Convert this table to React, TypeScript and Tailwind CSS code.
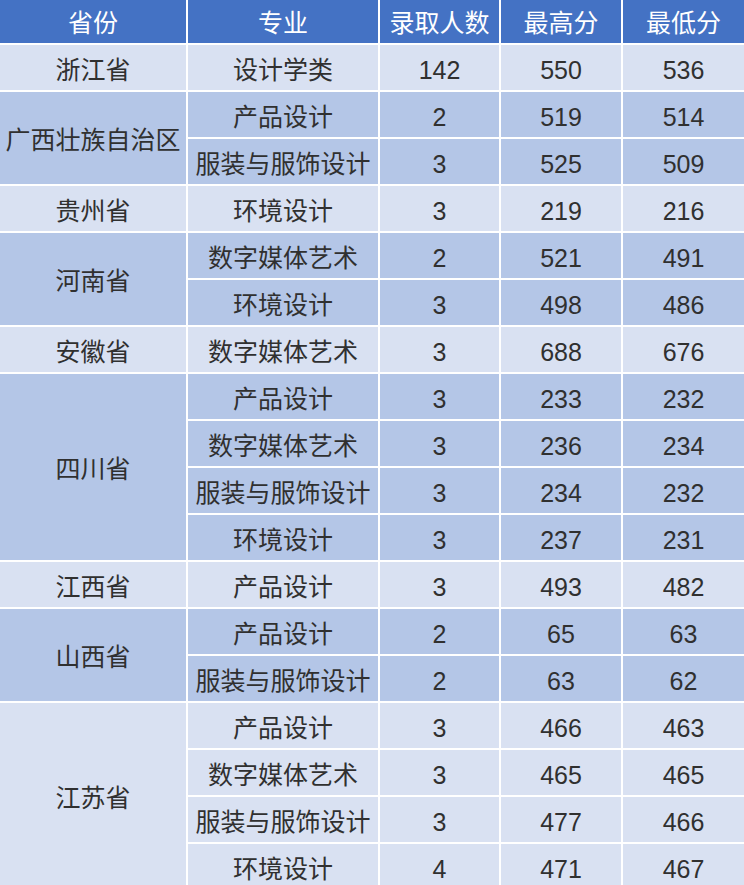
import React from "react";

type Row = { major: string; n: string; hi: string; lo: string };
type Group = { prov: string; rows: Row[] };

const data: Group[] = [
  { prov: "浙江省", rows: [{ major: "设计学类", n: "142", hi: "550", lo: "536" }] },
  {
    prov: "广西壮族自治区",
    rows: [
      { major: "产品设计", n: "2", hi: "519", lo: "514" },
      { major: "服装与服饰设计", n: "3", hi: "525", lo: "509" },
    ],
  },
  { prov: "贵州省", rows: [{ major: "环境设计", n: "3", hi: "219", lo: "216" }] },
  {
    prov: "河南省",
    rows: [
      { major: "数字媒体艺术", n: "2", hi: "521", lo: "491" },
      { major: "环境设计", n: "3", hi: "498", lo: "486" },
    ],
  },
  { prov: "安徽省", rows: [{ major: "数字媒体艺术", n: "3", hi: "688", lo: "676" }] },
  {
    prov: "四川省",
    rows: [
      { major: "产品设计", n: "3", hi: "233", lo: "232" },
      { major: "数字媒体艺术", n: "3", hi: "236", lo: "234" },
      { major: "服装与服饰设计", n: "3", hi: "234", lo: "232" },
      { major: "环境设计", n: "3", hi: "237", lo: "231" },
    ],
  },
  { prov: "江西省", rows: [{ major: "产品设计", n: "3", hi: "493", lo: "482" }] },
  {
    prov: "山西省",
    rows: [
      { major: "产品设计", n: "2", hi: "65", lo: "63" },
      { major: "服装与服饰设计", n: "2", hi: "63", lo: "62" },
    ],
  },
  {
    prov: "江苏省",
    rows: [
      { major: "产品设计", n: "3", hi: "466", lo: "463" },
      { major: "数字媒体艺术", n: "3", hi: "465", lo: "465" },
      { major: "服装与服饰设计", n: "3", hi: "477", lo: "466" },
      { major: "环境设计", n: "4", hi: "471", lo: "467" },
    ],
  },
];

const spanClass: Record<number, string> = {
  1: "row-span-1",
  2: "row-span-2",
  4: "row-span-4",
};

export default function App() {
  const cell = "flex items-center justify-center pt-[5px] text-[25px] text-[#303030] leading-none";
  return (
    <div
      className="w-[744px] h-[885px] overflow-hidden bg-white"
      style={{ fontFamily: '"Liberation Sans", "Noto Sans CJK SC", sans-serif' }}
    >
      <div className="grid grid-cols-[186px_190px_119px_120px_121px] grid-rows-[43px] auto-rows-[45px] gap-[2px] bg-white">
        {["省份", "专业", "录取人数", "最高分", "最低分"].map((h) => (
          <div key={h} className="flex items-center justify-center pt-[3px] bg-[#4472c4] text-white text-[25px] leading-none">
            {h}
          </div>
        ))}
        {data.map((g, gi) => {
          const bg = gi % 2 === 0 ? "bg-[#d9e1f2]" : "bg-[#b4c6e7]";
          return (
            <React.Fragment key={g.prov}>
              <div className={`${cell} ${bg} ${spanClass[g.rows.length]}`}>{g.prov}</div>
              {g.rows.map((r, ri) => (
                <React.Fragment key={ri}>
                  <div className={`${cell} ${bg}`}>{r.major}</div>
                  <div className={`${cell} ${bg}`}>{r.n}</div>
                  <div className={`${cell} ${bg}`}>{r.hi}</div>
                  <div className={`${cell} ${bg}`}>{r.lo}</div>
                </React.Fragment>
              ))}
            </React.Fragment>
          );
        })}
      </div>
    </div>
  );
}
